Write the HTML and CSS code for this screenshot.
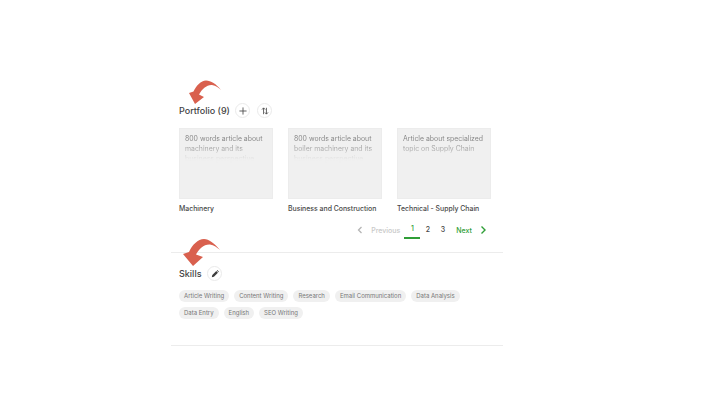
FILE: index.html
```html
<!DOCTYPE html>
<html lang="en">
<head>
  <meta charset="UTF-8" />
  <title>Portfolio and Skills</title>
  <link rel="stylesheet" href="styles.css">
</head>
<body>
  <main class="profile">
    <section class="portfolio">
      <svg class="arrow" viewBox="0 0 46 30" width="46" height="30">
        <path d="M41 14C36 8 31 4.500 26 4.500C21 4.500 16 10 13.500 15.500L9 17L15 28L24 21L19 18.500C22 13 27 8.500 32 9C36 9.500 39 12 41 14Z" fill="#d9604e"/>
      </svg>
      <div class="section-head">
        <h2>Portfolio (9)</h2>
        <button class="round-btn">
          <svg viewBox="0 0 14 14" width="14" height="14"><path d="M7 2V12M2 7H12" stroke="#4a4a4a" stroke-width="1.200" fill="none"/></svg>
        </button>
        <button class="round-btn">
          <svg viewBox="0 0 14 14" width="14" height="14"><path d="M5 11.500V2.800M2.800 5L5 2.600L7.200 5M9 2.500V11.200M6.800 9L9 11.400L11.200 9" stroke="#4a4a4a" stroke-width="1.200" fill="none"/></svg>
        </button>
      </div>
      <div class="cards">
        <div class="card">
          <div class="thumb"><p>800 words article about machinery and its business perspective</p></div>
          <div class="card-title">Machinery</div>
        </div>
        <div class="card">
          <div class="thumb"><p>800 words article about boiler machinery and its business perspective</p></div>
          <div class="card-title">Business and Construction</div>
        </div>
        <div class="card">
          <div class="thumb"><p>Article about specialized topic on Supply Chain</p></div>
          <div class="card-title">Technical - Supply Chain</div>
        </div>
      </div>
      <nav class="pager">
        <svg viewBox="0 0 8 10" width="8" height="10"><path d="M5.500 2L2.500 5L5.500 8" stroke="#b5b5b5" stroke-width="1.300" fill="none"/></svg>
        <span class="prev">Previous</span>
        <span class="page active">1</span>
        <span class="page">2</span>
        <span class="page">3</span>
        <span class="next">Next</span>
        <svg viewBox="0 0 8 10" width="8" height="10"><path d="M2.500 1.500L6 5L2.500 8.500" stroke="#2f9e37" stroke-width="1.400" fill="none"/></svg>
      </nav>
    </section>

    <section class="skills">
      <svg class="arrow" viewBox="0 0 46 34" width="46" height="34">
        <path d="M42 16C36 9 31 5 26 5C20 5 14 11 11 18L5 20L15 32L25 23L18 20.500C21 15 26 10 32 10.500C36 11 39 13.500 42 16Z" fill="#d9604e"/>
      </svg>
      <div class="section-head">
        <h2>Skills</h2>
        <button class="round-btn">
          <svg viewBox="0 0 14 14" width="14" height="14"><path d="M2.500 11.500L3.200 8.500L8.800 2.900L11.100 5.200L5.500 10.800Z M9.500 2.200L10.300 1.500L12.500 3.700L11.800 4.500Z" fill="#3d3d3d"/></svg>
        </button>
      </div>
      <div class="tags">
        <span class="tag">Article Writing</span>
        <span class="tag">Content Writing</span>
        <span class="tag">Research</span>
        <span class="tag">Email Communication</span>
        <span class="tag">Data Analysis</span>
        <span class="tag">Data Entry</span>
        <span class="tag">English</span>
        <span class="tag">SEO Writing</span>
      </div>
    </section>
  </main>
</body>
</html>
```

FILE: styles.css
```css
body {
  font-family: Inter, "Liberation Sans", sans-serif;
  background-color: #fff;
  margin: 0;
  color: #3c3c3c;
}

.profile {
  width: 332px;
  margin-left: 171px;
  padding-top: 101px;
}

.portfolio, .skills {
  position: relative;
  padding-left: 8px;
}

.portfolio {
  height: 151px;
  border-bottom: 1px solid #ececec;
}

.skills {
  height: 81px;
  padding-top: 11px;
  border-bottom: 1px solid #ececec;
}

.arrow {
  position: absolute;
  left: 9px;
  top: -25px;
}

.skills .arrow {
  left: 7px;
  top: -19px;
}

.section-head {
  display: flex;
  align-items: center;
  height: 19px;
}

h2 {
  margin: 0 5.500px 0 0;
  font-size: 9px;
  font-weight: 500;
  color: #444;
}

.round-btn {
  display: flex;
  align-items: center;
  justify-content: center;
  width: 15px;
  height: 15px;
  margin-right: 7px;
  padding: 0;
  border: 1px solid #eaeaea;
  border-radius: 50%;
  background-color: #fff;
}

.round-btn svg {
  width: 10px;
  height: 10px;
}

.cards {
  display: flex;
  gap: 15px;
  margin-top: 8px;
}

.card {
  width: 94px;
}

.thumb {
  height: 71px;
  box-sizing: border-box;
  padding: 5px 4px 5px 5px;
  background-color: #f0f0f0;
  border: 1px solid #ececec;
}

.thumb p {
  margin: 0;
  font-size: 6.900px;
  line-height: 10px;
  height: 30px;
  overflow: hidden;
  background: linear-gradient(#7a7a7a 0%, #8c8c8c 33%, #bdbdbd 60%, #eeeeee 85%);
  -webkit-background-clip: text;
  background-clip: text;
  color: transparent;
}

.card-title {
  margin-top: 5px;
  font-size: 6.900px;
  line-height: 10px;
  font-weight: 500;
  white-space: nowrap;
  color: #484848;
}

.pager {
  display: flex;
  align-items: center;
  justify-content: flex-end;
  height: 16px;
  margin-top: 8px;
  padding-right: 16px;
  font-size: 7px;
  font-weight: 500;
}

.prev {
  margin: 0 4px 0 7px;
  color: #c8c8c8;
}

.page {
  width: 15px;
  text-align: center;
  line-height: 16px;
  color: #484848;
}

.page.active {
  width: 16px;
  color: #2f9e37;
  border-bottom: 2px solid #2f9e37;
}

.next {
  margin: 0 7px 0 6px;
  color: #2f9e37;
}

.tags {
  display: flex;
  flex-wrap: wrap;
  gap: 5px;
  margin-top: 7px;
  padding-right: 30px;
}

.tag {
  height: 12px;
  padding: 0 5px;
  border-radius: 6px;
  background-color: #f0f0f0;
  font-size: 6px;
  line-height: 12px;
  color: #777;
}
```
